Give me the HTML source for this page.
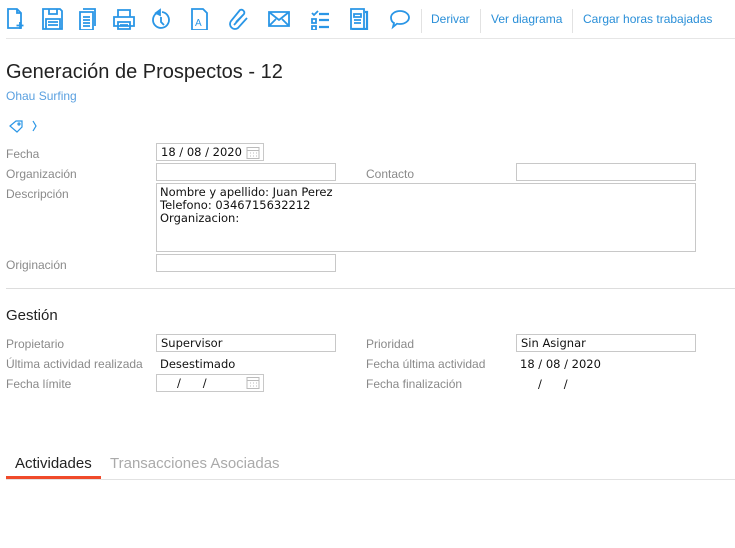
<!DOCTYPE html><html><head><meta charset="utf-8"><style>
body{margin:0;width:735px;height:548px;background:#fff;font-family:"Liberation Sans",sans-serif;position:relative;overflow:hidden}
.a{position:absolute}
.lbl{position:absolute;font-size:12px;color:#8a8a8a}
.in{position:absolute;border:1px solid #c8c8c8;height:18px;box-sizing:border-box;font-family:"DejaVu Sans",sans-serif;font-size:11.5px;color:#111;padding:1px 4px;line-height:14px}
svg.i{position:absolute;top:8px;width:22px;height:22px;fill:none;stroke:#2a96e6;stroke-width:1.8}
.tb{position:absolute;top:12px;font-size:12px;color:#2a8fd8}
.sep{position:absolute;top:9px;width:1px;height:24px;background:#e2e2e2}
</style></head><body>
<svg class="i" style="left:6px" viewBox="0 0 22 22"><path d="M2 1h9l4 4v15H2z M11 1v4h4"/><path d="M14 14v7M10.5 17.5h7"/></svg>
<svg class="i" style="left:42px" viewBox="0 0 22 22"><path d="M1 1h17l2 2v18H1z M7 1v5h8V1 M4 11h14v10H4z M6 14h10M6 17h10"/></svg>
<svg class="i" style="left:78px" viewBox="0 0 22 22"><path d="M5 1h12v17 M2 4h13v18H2z M5 9h7M5 12h7M5 15h7M5 18h7"/></svg>
<svg class="i" style="left:113px" viewBox="0 0 22 22"><path d="M5 9V2h12v7 M1 9h20v9H1z M5 14h12v7H5z M7 17h8"/></svg>
<svg class="i" style="left:150px" viewBox="0 0 22 22"><path d="M7 5a8 8 0 1 0 5-1 M11 9v5l3 3"/><path d="M10 2l-4 3 4 2z" fill="#2a96e6"/></svg>
<svg class="i" style="left:189px" viewBox="0 0 22 22"><path d="M3 1h11l4 4v17H3z"/><text x="6" y="18" font-size="10" fill="#2a96e6" stroke="none" font-family="Liberation Sans">A</text></svg>
<svg class="i" style="left:228px" viewBox="0 0 22 22"><path d="M6 17l10-11a3 3 0 0 0-4-4L3 13a5 5 0 0 0 7 7l9-10 M8 14l7-7"/></svg>
<svg class="i" style="left:268px" viewBox="0 0 22 22"><path d="M1 4h20v14H1z M1 4l10 8 10-8 M1 18l7-7M21 18l-7-7"/></svg>
<svg class="i" style="left:309px" viewBox="0 0 22 22"><path d="M3 5l2 2 4-4 M3 11h4v4H3z M3 18h4v4H3z"/><path d="M10 6h10M10 12h10M10 19h10" stroke-width="2.2"/></svg>
<svg class="i" style="left:348px" viewBox="0 0 22 22"><path d="M3 1h13v20H3z M6 6h7v3H6z M6 12h7M6 15h7" /><path d="M17 4h2v17H4" stroke-width="2.2"/></svg>
<svg class="i" style="left:389px" viewBox="0 0 22 22"><path d="M11 3c5 0 9 3 9 6.5S16 16 11 16c-1 0-2 0-3-.3L4 19l1-4C3 14 2 12 2 9.5 2 6 6 3 11 3z"/></svg>
<div class="sep" style="left:421px"></div><div class="tb" style="left:431px">Derivar</div>
<div class="sep" style="left:480px"></div><div class="tb" style="left:491px">Ver diagrama</div>
<div class="sep" style="left:572px"></div><div class="tb" style="left:583px">Cargar horas trabajadas</div>
<div class="a" style="left:6px;top:38px;width:729px;height:1px;background:#e6e6e6"></div>
<div class="a" style="left:6px;top:61px;font-size:20px;color:#222">Generación de Prospectos - 12</div>
<div class="a" style="left:6px;top:89px;font-size:12px;color:#5aa0e0">Ohau Surfing</div>
<svg class="a" style="left:8px;top:119px" width="30" height="14" viewBox="0 0 30 14" fill="none" stroke="#2a96e6" stroke-width="1.2"><path d="M2 7l6-5h6v6l-5 5z"/><circle cx="11" cy="5" r="1"/><path d="M25 2l3 5-3 5"/></svg>
<div class="lbl" style="left:6px;top:147px">Fecha</div>
<div class="in" style="left:156px;top:143px;width:108px">18 / 08 / 2020</div>
<svg class="a" style="left:246px;top:146px" width="14" height="13" viewBox="0 0 14 13" fill="none" stroke="#bbb"><rect x="1" y="1.5" width="12" height="11"/><path d="M1 4.5h12M4 7h1M7 7h1M10 7h1M4 10h1M7 10h1M10 10h1"/></svg>
<div class="lbl" style="left:6px;top:167px">Organización</div>
<div class="in" style="left:156px;top:163px;width:180px"></div>
<div class="lbl" style="left:366px;top:167px">Contacto</div>
<div class="in" style="left:516px;top:163px;width:180px"></div>
<div class="lbl" style="left:6px;top:187px">Descripción</div>
<div class="in" style="left:156px;top:183px;width:540px;height:69px;line-height:13px;padding:2px 3px">Nombre y apellido: Juan Perez<br>Telefono: 0346715632212<br>Organizacion:</div>
<div class="lbl" style="left:6px;top:258px">Originación</div>
<div class="in" style="left:156px;top:254px;width:180px"></div>
<div class="a" style="left:6px;top:288px;width:729px;height:1px;background:#ddd"></div>
<div class="a" style="left:6px;top:307px;font-size:15px;color:#222">Gestión</div>
<div class="lbl" style="left:6px;top:337px">Propietario</div>
<div class="in" style="left:156px;top:334px;width:180px">Supervisor</div>
<div class="lbl" style="left:366px;top:337px">Prioridad</div>
<div class="in" style="left:516px;top:334px;width:180px">Sin Asignar</div>
<div class="lbl" style="left:6px;top:357px">Última actividad realizada</div>
<div class="a" style="left:160px;top:357px;font-family:'DejaVu Sans',sans-serif;font-size:11.5px;color:#111">Desestimado</div>
<div class="lbl" style="left:366px;top:357px">Fecha última actividad</div>
<div class="a" style="left:520px;top:357px;font-family:'DejaVu Sans',sans-serif;font-size:11.5px;color:#111">18 / 08 / 2020</div>
<div class="lbl" style="left:6px;top:377px">Fecha límite</div>
<div class="in" style="left:156px;top:374px;width:108px;padding-left:20px">/&nbsp;&nbsp;&nbsp;&nbsp;&nbsp;&nbsp;/</div>
<svg class="a" style="left:246px;top:376px" width="14" height="13" viewBox="0 0 14 13" fill="none" stroke="#bbb"><rect x="1" y="1.5" width="12" height="11"/><path d="M1 4.5h12M4 7h1M7 7h1M10 7h1M4 10h1M7 10h1M10 10h1"/></svg>
<div class="lbl" style="left:366px;top:377px">Fecha finalización</div>
<div class="a" style="left:538px;top:377px;font-family:'DejaVu Sans',sans-serif;font-size:11.5px;color:#111">/&nbsp;&nbsp;&nbsp;&nbsp;&nbsp;&nbsp;/</div>
<div class="a" style="left:15px;top:455px;font-size:15px;color:#222">Actividades</div>
<div class="a" style="left:110px;top:455px;font-size:15px;color:#aaa">Transacciones Asociadas</div>
<div class="a" style="left:6px;top:479px;width:729px;height:1px;background:#e2e2e2"></div>
<div class="a" style="left:6px;top:476px;width:95px;height:3px;background:#f04a2a"></div>
</body></html>
